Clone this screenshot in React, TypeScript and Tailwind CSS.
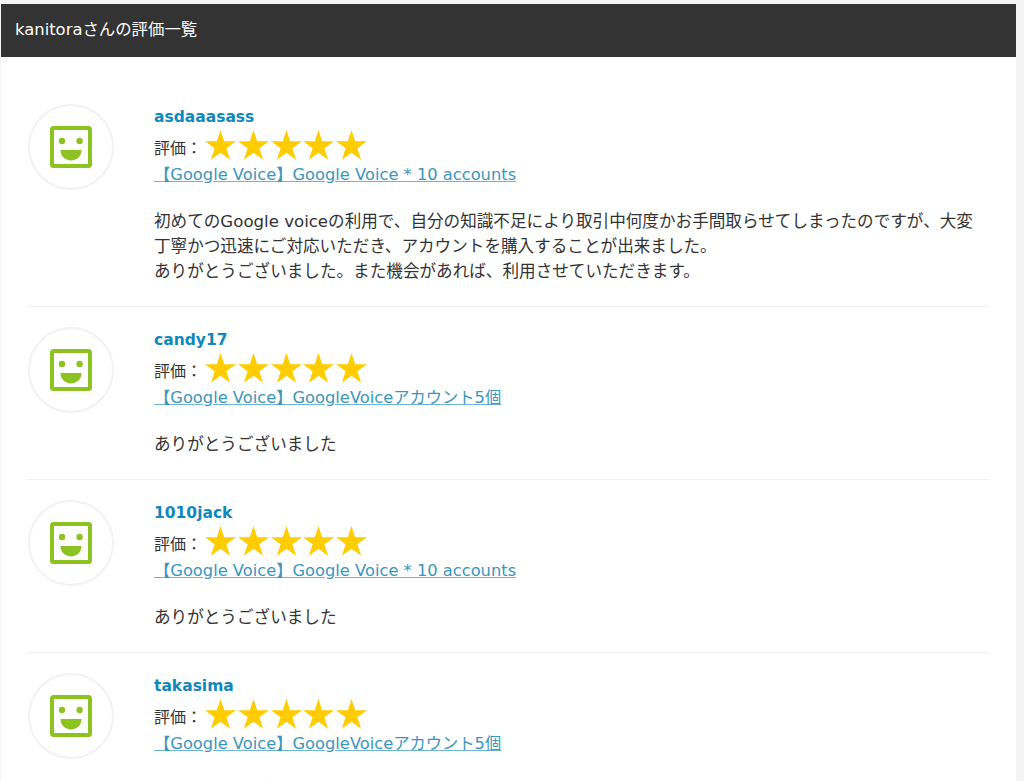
import React from "react";

type Review = {
  id: number;
  user: string;
  item: string;
  comment: string[];
};

const reviews: Review[] = [
  {
    id: 1,
    user: "asdaaasass",
    item: "【Google Voice】Google Voice * 10 accounts",
    comment: [
      "初めてのGoogle voiceの利用で、自分の知識不足により取引中何度かお手間取らせてしまったのですが、大変丁寧かつ迅速にご対応いただき、アカウントを購入することが出来ました。",
      "ありがとうございました。また機会があれば、利用させていただきます。",
    ],
  },
  {
    id: 2,
    user: "candy17",
    item: "【Google Voice】GoogleVoiceアカウント5個",
    comment: ["ありがとうございました"],
  },
  {
    id: 3,
    user: "1010jack",
    item: "【Google Voice】Google Voice * 10 accounts",
    comment: ["ありがとうございました"],
  },
  {
    id: 4,
    user: "takasima",
    item: "【Google Voice】GoogleVoiceアカウント5個",
    comment: ["ありがとうございました"],
  },
];

const Avatar = () => (
  <div className="flex h-[86px] w-[86px] shrink-0 items-center justify-center rounded-full border-2 border-[#f2f2f2] bg-white">
    <svg width="42" height="42" viewBox="0 0 42 42" className="ml-[-1px]">
      <rect x="2" y="2" width="38" height="38" rx="1.5" fill="none" stroke="#8cc320" strokeWidth="4" />
      <circle cx="12" cy="15" r="3.2" fill="#8cc320" />
      <circle cx="29.6" cy="15" r="3.2" fill="#8cc320" />
      <path d="M10.5 24h21c0 6-4.5 10.4-10.5 10.4S10.5 30 10.5 24z" fill="#8cc320" />
    </svg>
  </div>
);

const Stars = () => (
  <span className="flex gap-[1.8px]">
    {[0, 1, 2, 3, 4].map((i) => (
      <svg key={i} width="31" height="30" viewBox="0 0 31 30">
        <path d="M15.5 0l3.7 11.3h11.8l-9.6 7 3.7 11.4-9.6-7-9.6 7 3.7-11.4-9.6-7h11.8z" fill="#ffcc00" />
      </svg>
    ))}
  </span>
);

const ReviewRow = ({ review }: { review: Review }) => (
  <section className="flex border-b border-[#f0f0f0] pb-[22px] pt-[20px]">
    <Avatar />
    <div className="ml-[40px] min-w-0 flex-1">
      <h3 className="text-[15.5px] font-bold leading-[26px] text-[#1188bb]">{review.user}</h3>
      <div className="flex h-[30px] items-center text-[16px] text-[#333333]">
        <span className="mt-[8px] mr-[3px] w-[48px]">評価：</span>
        <Stars />
      </div>
      <a className="mt-[3px] block text-[16.3px] leading-[24px] text-[#3a96bd] underline decoration-[#6db6d3]">
        {" "}
        {review.item}
      </a>
      <div className="mt-[22px] text-[16.6px] leading-[25px] text-[#333333]">
        {review.comment.map((line) => (
          <p key={line}>{line}</p>
        ))}
      </div>
    </div>
  </section>
);

export default function App() {
  return (
    <div className="h-[781px] overflow-hidden bg-[#f4f4f4] pl-[1px] pr-[8px] pt-[4px] font-['DejaVu_Sans','Noto_Sans_CJK_JP',sans-serif]">
      <div className="h-full bg-white">
        <h2 className="flex h-[53px] items-center bg-[#333333] px-[14px] text-[16.4px] text-white">
          kanitoraさんの評価一覧
        </h2>
        <div className="px-[27px] pr-[28px] pt-[27px]">
          {reviews.map((review) => (
            <ReviewRow key={review.id} review={review} />
          ))}
        </div>
      </div>
    </div>
  );
}
